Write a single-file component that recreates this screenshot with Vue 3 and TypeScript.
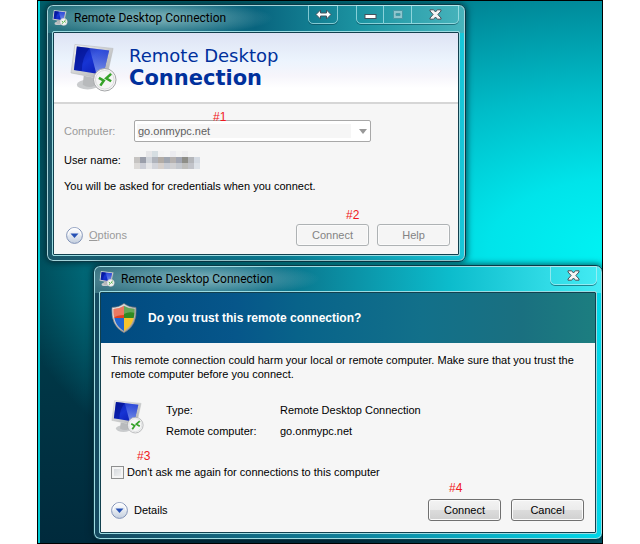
<script setup lang="ts">
import { ref } from 'vue'

interface Note {
  id: number
  x: number
  y: number
}

const notes: Note[] = [
  { id: 1, x: 213, y: 109 },
  { id: 2, x: 346, y: 207 },
  { id: 3, x: 137, y: 448 },
  { id: 4, x: 449, y: 480 },
]

const mosaic: string[][] = [
  ['#f5f5f5', '#f5f5f5', '#e6e6e8', '#d6dee2', '#f3f3f3', '#f5f5f5', '#ececf0', '#f3f3f3', '#eeeef0', '#f5f5f5', '#f5f5f5'],
  ['#c6c4c2', '#9a9eaa', '#d0d4da', '#b0b4bc', '#b2aca6', '#a0a6b0', '#b6b2b0', '#a2a6b2', '#8e8e88', '#b4b6ba', '#d4dae2'],
  ['#dcdad8', '#ccced6', '#e6e6e8', '#d2d4da', '#d6d0cc', '#c8ccd4', '#d0d0d2', '#c4c8ce', '#bebebc', '#c2c4ca', '#dde2e8'],
]

const computer = ref('go.onmypc.net')
const skipPrompt = ref(false)
</script>

<template>
  <main class="desktop">
    <svg class="defs" aria-hidden="true">
      <defs>
        <linearGradient id="screen" x1="0" y1="0" x2="1" y2="1">
          <stop offset="0" stop-color="#0618a0" />
          <stop offset=".45" stop-color="#1734d4" />
          <stop offset="1" stop-color="#0716a8" />
        </linearGradient>
        <linearGradient id="shine" x1="0" y1="0" x2="0" y2="1">
          <stop offset="0" stop-color="#7c9af4" stop-opacity=".2" />
          <stop offset="1" stop-color="#a5c0ff" stop-opacity=".75" />
        </linearGradient>
        <linearGradient id="metal" x1="0" y1="0" x2="1" y2="1">
          <stop offset="0" stop-color="#f4f4f4" />
          <stop offset="1" stop-color="#a8aaac" />
        </linearGradient>
        <linearGradient id="disc" x1="0" y1="0" x2="0" y2="1">
          <stop offset="0" stop-color="#ffffff" />
          <stop offset=".5" stop-color="#e4e9f0" />
          <stop offset="1" stop-color="#c3cede" />
        </linearGradient>
        <symbol id="remote-pc" viewBox="0 0 48 50">
          <ellipse cx="18" cy="42" rx="11" ry="5" fill="#c9cbcd" />
          <path d="M14 33 L25 35 L25 43 Q19 46 13 42Z" fill="#b8babc" />
          <path d="M5 1 L44 5 L37 37 L1 30Z" fill="url(#metal)" stroke="#b9bbbd" stroke-width=".6" />
          <path d="M7 3 L40 7 L34 32 L4 27Z" fill="url(#screen)" />
          <path d="M20 4.500 L40 7 L34 32 L27 31Z" fill="url(#shine)" />
          <path d="M7 3 L20 4.500 Q12 14 12 28 L4 27Z" fill="#02108c" opacity=".55" />
          <circle cx="35.500" cy="37" r="11.500" fill="#f5f5f5" stroke="#a2a4a6" />
          <circle cx="35.500" cy="37" r="9.500" fill="none" stroke="#d9dadb" />
          <path d="M29.500 35 L34.500 38 L31 43 M42 31 L37 35.500 L42 38.500" fill="none" stroke="#36a329" stroke-width="2.600" />
        </symbol>
        <symbol id="expander" viewBox="0 0 17 17">
          <circle cx="8.500" cy="8.500" r="7.900" fill="url(#disc)" stroke="#8394b8" />
          <path d="M2 8 A6.500 6.500 0 0 1 15 8" fill="none" stroke="#fff" />
          <path d="M4.500 6.500 H12.500 L8.500 11Z" fill="#2651b5" />
        </symbol>
        <symbol id="close-glyph" viewBox="0 0 13 11">
          <path d="M1 .8 H4.700 L6.500 3 L8.300 .8 H12 V2 L8.900 5.500 L12 9 V10.200 H8.300 L6.500 8 L4.700 10.200 H1 V9 L4.100 5.500 L1 2Z" fill="#f5f5f5" stroke="#46525c" />
        </symbol>
      </defs>
    </svg>

    <section class="window window-main" aria-label="Remote Desktop Connection">
      <header class="titlebar">
        <svg class="title-icon"><use href="#remote-pc" /></svg>
        <span class="title">Remote Desktop Connection</span>
        <div class="caption">
          <button class="cap cap-span" type="button" aria-label="Span">
            <svg width="17" height="11" viewBox="0 0 17 11"><path d="M1 5.500 L5.500 1 V4 H11.500 V1 L16 5.500 L11.500 10 V7 H5.500 V10Z" fill="#fff" stroke="#46525c" /></svg>
          </button>
          <div class="cap-group">
            <button class="cap cap-small" type="button" aria-label="Minimize">
              <svg width="13" height="11" viewBox="0 0 13 11"><rect x="1" y="5.500" width="11" height="4" fill="#fff" stroke="#46525c" /></svg>
            </button>
            <button class="cap cap-small" type="button" aria-label="Maximize" disabled>
              <svg width="12" height="11" viewBox="0 0 12 11"><path d="M1.500 1.500 H10.500 V9.500 H1.500Z M4 4.500 V6.500 H8 V4.500Z" fill="#8fc6ce" fill-rule="evenodd" stroke="#4b98a4" /></svg>
            </button>
            <button class="cap cap-close" type="button" aria-label="Close">
              <svg width="13" height="11"><use href="#close-glyph" /></svg>
            </button>
          </div>
        </div>
      </header>
      <div class="client">
        <div class="brand">
          <svg class="brand-icon"><use href="#remote-pc" /></svg>
          <h1 class="brand-name">Remote Desktop<strong>Connection</strong></h1>
        </div>
        <form class="form" @submit.prevent>
          <div class="fields">
            <label class="muted" for="computer">Computer:</label>
            <div class="combo">
              <select id="computer" v-model="computer" disabled>
                <option>go.onmypc.net</option>
              </select>
              <svg class="combo-arrow" width="8" height="5" viewBox="0 0 8 5"><path d="M0 0 H8 L4 5Z" fill="#989898" /></svg>
            </div>
            <span>User name:</span>
            <svg class="mosaic" viewBox="0 0 11 3" preserveAspectRatio="none" shape-rendering="crispEdges">
              <g v-for="(row, y) in mosaic" :key="y">
                <rect v-for="(color, x) in row" :key="x" :x="x" :y="y" width="1" height="1" :fill="color" />
              </g>
            </svg>
          </div>
          <p class="hint">You will be asked for credentials when you connect.</p>
          <div class="actions">
            <button class="expand muted" type="button" disabled>
              <svg class="expand-icon"><use href="#expander" /></svg>
              <span><u>O</u>ptions</span>
            </button>
            <button class="btn" type="submit" disabled>Connect</button>
            <button class="btn" type="button" disabled>Help</button>
          </div>
        </form>
      </div>
    </section>

    <section class="window window-trust" aria-label="Remote Desktop Connection">
      <header class="titlebar">
        <svg class="title-icon"><use href="#remote-pc" /></svg>
        <span class="title">Remote Desktop Connection</span>
        <div class="caption">
          <div class="cap-group">
            <button class="cap cap-close" type="button" aria-label="Close">
              <svg width="13" height="11"><use href="#close-glyph" /></svg>
            </button>
          </div>
        </div>
      </header>
      <div class="client">
        <div class="banner">
          <svg class="shield" viewBox="0 0 26 30">
            <defs>
              <clipPath id="shield-clip"><path d="M13 3 Q18 6 23.500 6 Q24 22 13 28 Q2 22 2.500 6 Q8 6 13 3Z" /></clipPath>
              <linearGradient id="shield-rim" x1="0" y1="0" x2="1" y2="1">
                <stop offset="0" stop-color="#f2f2f2" />
                <stop offset="1" stop-color="#8e8e8e" />
              </linearGradient>
            </defs>
            <path d="M13 .5 Q18 4.500 25 4.500 Q26.500 23 13 29.700 Q-.5 23 1 4.500 Q8 4.500 13 .5Z" fill="url(#shield-rim)" stroke="#7a7470" stroke-width=".6" />
            <g clip-path="url(#shield-clip)">
              <rect width="13" height="15" fill="#e2401e" />
              <rect x="13" width="13" height="15" fill="#2f8a22" />
              <rect y="15" width="13" height="15" fill="#2166cf" />
              <rect x="13" y="15" width="13" height="15" fill="#f6c32c" />
              <path d="M2 5 Q10 4 13 3 V12 Q6 12 2 15Z" fill="#fff" opacity=".3" />
              <path d="M13 3 L24 6 V10 Q18 8 13 11Z" fill="#fff" opacity=".25" />
            </g>
          </svg>
          <h2 class="banner-title">Do you trust this remote connection?</h2>
        </div>
        <form class="trust" @submit.prevent>
          <p class="warning">This remote connection could harm your local or remote computer. Make sure that you trust the remote computer before you connect.</p>
          <div class="facts">
            <svg class="facts-icon"><use href="#remote-pc" /></svg>
            <dl class="facts-list">
              <dt>Type:</dt>
              <dd>Remote Desktop Connection</dd>
              <dt>Remote computer:</dt>
              <dd>go.onmypc.net</dd>
            </dl>
          </div>
          <label class="check" for="skip">
            <input id="skip" v-model="skipPrompt" type="checkbox" />
            <span>Don't ask me again for connections to this computer</span>
          </label>
          <div class="actions">
            <button class="expand" type="button">
              <svg class="expand-icon"><use href="#expander" /></svg>
              <span>Details</span>
            </button>
            <button class="btn" type="submit">Connect</button>
            <button class="btn" type="button">Cancel</button>
          </div>
        </form>
      </div>
    </section>

    <span v-for="note in notes" :key="note.id" class="note" :style="{ left: note.x - 38 + 'px', top: note.y - 1 + 'px' }">#{{ note.id }}</span>
  </main>
</template>

<style>
body {
  margin: 0;
  background: #fff;
}
</style>

<style scoped>
.desktop {
  position: relative;
  box-sizing: border-box;
  min-height: 100vh;
  margin: 0 37px;
  overflow: hidden;
  border: 1px solid #000;
  font: 11px/16px "Liberation Sans", sans-serif;
  color: #000;
  background:
    linear-gradient(#00d8e0, #00c8d0) left / 2px 100% no-repeat,
    radial-gradient(ellipse 620px 330px at 104% 46%, #00f4f4 0%, #00e4ea 22%, #00bcc8 48%, #008a9a 76%, rgba(0, 104, 118, 0) 100%),
    linear-gradient(#00606c, #003e4c 50%, #002a3c);
}
.defs {
  position: absolute;
  width: 0;
  height: 0;
}
.window {
  position: absolute;
  box-sizing: border-box;
  padding: 0 5px 5px;
  border: 1px solid #0a3a46;
  border-radius: 7px;
}
.window-main {
  top: 3px;
  left: 8px;
  width: 420px;
  background:
    radial-gradient(ellipse 120px 18px at 106px 13px, rgba(140, 188, 194, .75) 20%, rgba(140, 188, 194, 0)) top / 100% 28px no-repeat,
    linear-gradient(90deg, #2a7480, #08647e 50%, #1c94a2 75%, #48b4bc) top / 100% 28px no-repeat,
    linear-gradient(90deg, #1c5668, #0a7a90 55%, #18c8da);
  box-shadow: inset 0 0 0 1px #a4d4da, 0 0 6px 1px rgba(0, 30, 40, .7);
}
.window-trust {
  top: 264px;
  left: 55px;
  width: 510px;
  background:
    radial-gradient(ellipse 120px 18px at 106px 13px, rgba(130, 180, 190, .8) 20%, rgba(130, 180, 190, 0)) top / 100% 27px no-repeat,
    linear-gradient(90deg, #3c7482, #0a6e86 35%, #0cbccc 70%, #44ecf4) top / 100% 27px no-repeat,
    linear-gradient(90deg, #164a60, #10809a 50%, #00d8ea);
  box-shadow: inset 0 0 0 1px #a0dce2, 0 0 6px 1px rgba(0, 30, 40, .7);
}
.titlebar {
  display: flex;
  align-items: center;
  height: 26px;
}
.window-trust .titlebar {
  height: 25px;
}
.title-icon {
  width: 16px;
  height: 16px;
  margin-right: 6px;
}
.title {
  font: 12px/18px Roboto, sans-serif;
}
.caption {
  display: flex;
  align-self: flex-start;
  gap: 8px;
  margin-left: auto;
}
.window-main .caption {
  gap: 18px;
  padding-right: 1px;
}
.cap-group {
  display: flex;
}
.cap {
  display: flex;
  align-items: center;
  justify-content: center;
  box-sizing: border-box;
  height: 19px;
  padding: 0;
  border: 1px solid rgba(190, 240, 244, .65);
  border-left-width: 0;
  background: transparent;
  box-shadow: 0 1px 0 rgba(10, 70, 84, .6);
}
.cap-span {
  width: 30px;
  border-left-width: 1px;
  border-radius: 0 0 5px 5px;
}
.cap-small {
  width: 28px;
}
.cap-group .cap:first-child {
  border-left-width: 1px;
  border-bottom-left-radius: 5px;
}
.cap-close {
  width: 47px;
  border-bottom-right-radius: 5px;
}
.client {
  border: 1px solid #9cdce2;
  border-radius: 2px;
  box-shadow: inset 0 0 0 1px #12404e;
  background: #f6f6f6;
  padding: 1px;
}
.brand {
  display: flex;
  align-items: center;
  box-sizing: border-box;
  height: 71px;
  padding: 0 16px;
  gap: 12px;
  border-bottom: 2px solid #d6d6d6;
  background: linear-gradient(#dde3f4, #ecf4fd 40%, #f6f5fb 62%, #fff 80%);
}
.brand-icon {
  width: 47px;
  height: 50px;
}
.brand-name {
  margin: 0;
  font: 18px/20px "DejaVu Sans", sans-serif;
  color: #00309c;
}
.brand-name strong {
  display: block;
  font-size: 21px;
  line-height: 24px;
}
.form {
  padding: 16px 8px 8px 10px;
}
.fields {
  display: grid;
  grid-template-columns: 70px 237px;
  align-items: center;
  row-gap: 10px;
}
.muted {
  color: #9a9a9a;
}
.combo {
  display: grid;
  align-items: center;
}
.combo select {
  grid-area: 1 / 1;
  box-sizing: border-box;
  width: 100%;
  height: 22px;
  margin: 0;
  padding: 0 24px 0 3px;
  appearance: none;
  border: 1px solid #a8a8a8;
  border-radius: 2px;
  background: #fff linear-gradient(#f6f6f6, #f6f6f6) 2px center / 214px 14px no-repeat;
  font: inherit;
  color: #606060;
  opacity: 1;
}
.combo-arrow {
  grid-area: 1 / 1;
  justify-self: end;
  margin-right: 4px;
}
.mosaic {
  width: 66px;
  height: 18px;
  margin: -1px 0;
}
.hint {
  margin: 10px 0 30px;
}
.actions {
  display: flex;
  align-items: center;
  gap: 8px;
}
.btn {
  box-sizing: border-box;
  width: 73px;
  height: 22px;
  padding: 0;
  border: 1px solid #707070;
  border-radius: 3px;
  background: linear-gradient(#f3f3f3, #ebebeb 50%, #dcdcdc 50%, #d0d0d0);
  box-shadow: inset 0 0 0 1px #fbfbfb;
  font: inherit;
  color: #000;
}
.btn:disabled {
  border-color: #aeb2b4;
  background: #f5f5f5;
  color: #838383;
}
.expand {
  display: flex;
  align-items: center;
  gap: 6px;
  margin-right: auto;
  padding: 0;
  border: 0;
  background: none;
  font: inherit;
  color: #000;
}
.expand.muted {
  padding-left: 2px;
  color: #9a9a9a;
}
.expand-icon {
  width: 17px;
  height: 17px;
}
.banner {
  display: flex;
  align-items: center;
  height: 50px;
  padding: 0 10px;
  gap: 11px;
  background: linear-gradient(90deg, #004a80, #06568a 27%, #08638a 40%, #12708a 65%, #1a7080 85%, #1c7e80);
}
.shield {
  width: 26px;
  height: 30px;
}
.banner-title {
  margin: 0;
  font-size: 12px;
  color: #fff;
}
.trust {
  padding: 10px 11px 11px 10px;
}
.trust .actions {
  gap: 10px;
}
.warning {
  margin: 0;
  line-height: 14px;
}
.facts {
  display: flex;
  gap: 22px;
  margin: 19px 0 22px;
}
.facts-icon {
  width: 33px;
  height: 34px;
}
.facts-list {
  display: grid;
  grid-template-columns: 114px auto;
  margin: 0;
  line-height: 21px;
}
.facts-list dd {
  margin: 0;
}
.check {
  display: flex;
  align-items: center;
  gap: 3px;
  margin-bottom: 19px;
}
.check input {
  box-sizing: border-box;
  width: 13px;
  height: 13px;
  margin: 0;
  appearance: none;
  border: 1px solid #8e8f8f;
  background: linear-gradient(135deg, #cfd3d8, #f6f6f6);
  box-shadow: inset 0 0 0 2px #f4f4f4;
}
.check input:checked {
  background: #2651b5;
}
.note {
  position: absolute;
  font: 12px/16px "Liberation Sans", sans-serif;
  color: #f01820;
}
</style>
